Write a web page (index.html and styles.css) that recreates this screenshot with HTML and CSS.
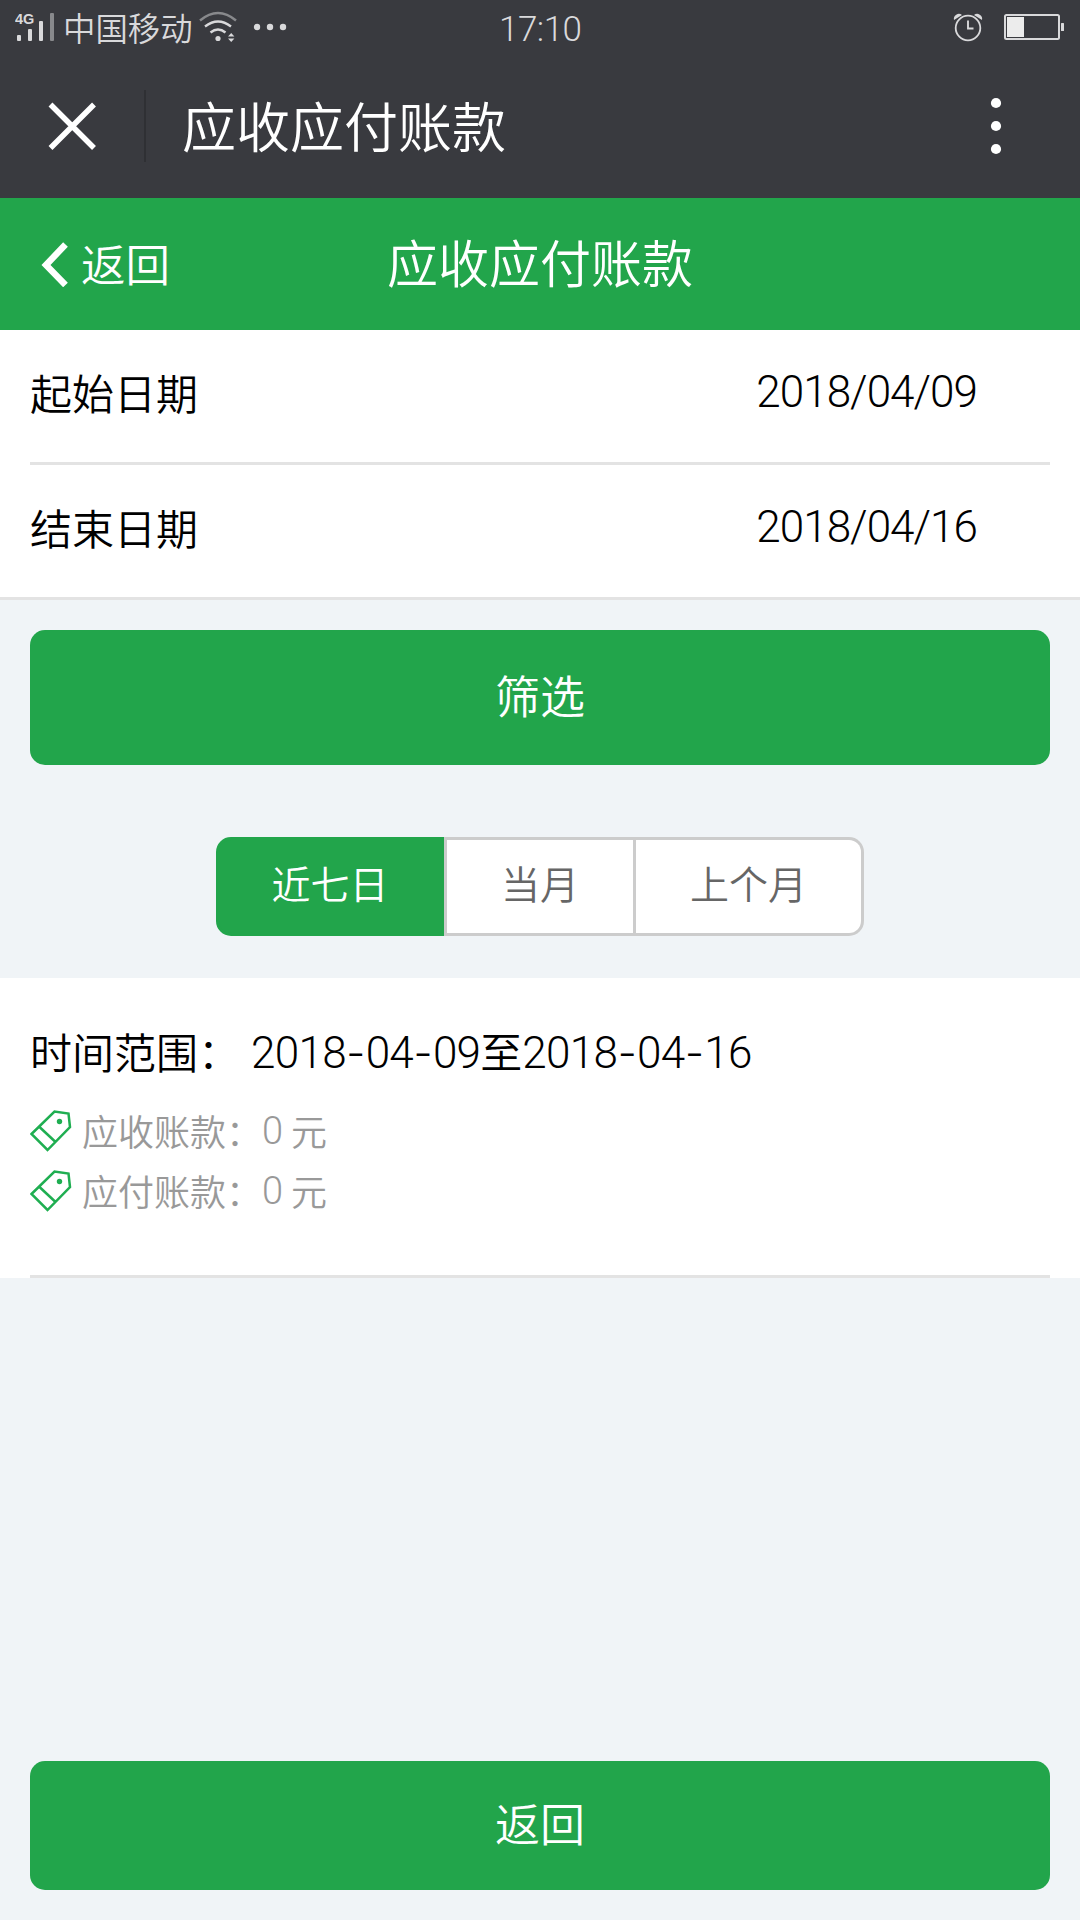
FILE: index.html
```html
<!DOCTYPE html>
<html lang="zh-CN">
<head>
<meta charset="utf-8">
<title>应收应付账款</title>
<link rel="stylesheet" href="styles.css">
</head>
<body>
<div class="screen">
  <div class="status">
    <svg class="signal" width="42" height="32" viewBox="0 0 42 32" fill="#d9d9db">
      <text class="signal-label" x="0" y="14">4G</text>
      <rect x="2" y="25" width="4" height="6" rx="1"/>
      <rect x="13" y="19" width="4" height="12" rx="1"/>
      <rect x="24" y="11" width="4" height="20" rx="1"/>
      <rect x="35" y="3" width="4" height="28" rx="1" fill="#88898c"/>
    </svg>
    <span class="carrier">中国移动</span>
    <svg class="wifi" width="40" height="32" viewBox="0 0 40 32" fill="none" stroke="#d9d9db" stroke-width="2.4">
      <path d="M1 10.5Q19 -4.500 37 10.500" stroke="#88898c"/>
      <path d="M6 16.500Q19 6.500 32 16.500"/>
      <path d="M11.500 22.500Q19 16.500 26.500 22.500"/>
      <circle cx="19" cy="28.500" r="2.600" fill="#d9d9db" stroke="none"/>
      <path d="M29 26.500l3.200-3.500 3.200 3.500zM29 28.500l3.200 3.500 3.200-3.500z" fill="#d9d9db" stroke="none"/>
    </svg>
    <svg class="more" width="34" height="8" viewBox="0 0 34 8" fill="#d9d9db">
      <circle cx="4" cy="4" r="3.200"/><circle cx="17" cy="4" r="3.200"/><circle cx="30" cy="4" r="3.200"/>
    </svg>
    <span class="clock">17:10</span>
    <svg class="alarm" width="30" height="30" viewBox="0 0 30 30">
      <path d="M1 8a5 5 0 0 1 8-5zM29 8a5 5 0 0 0-8-5z" fill="#d9d9db"/>
      <circle cx="15" cy="16" r="12.300" fill="#393a3f" stroke="#d9d9db" stroke-width="1.800"/>
      <path d="M15 8.500V16.500H20.500" fill="none" stroke="#d9d9db" stroke-width="1.900"/>
    </svg>
    <svg class="battery" width="60" height="26" viewBox="0 0 60 26">
      <rect x="1" y="1" width="54" height="24" rx="1.500" fill="none" stroke="#d9d9db" stroke-width="2"/>
      <rect x="3" y="3" width="17" height="20" fill="#ececec"/>
      <rect x="57" y="9" width="3" height="8" rx="0.500" fill="#d9d9db"/>
    </svg>
  </div>
  <header class="appbar">
    <svg class="close" width="48" height="48" viewBox="0 0 48 48" stroke="#fff" stroke-width="5.500">
      <path d="M2.500 2.500L46 46M46 2.500L2.500 46"/>
    </svg>
    <span class="divider"></span>
    <h1 class="appbar-title">应收应付账款</h1>
    <svg class="menu" width="12" height="58" viewBox="0 0 12 58" fill="#fff">
      <circle cx="6" cy="6" r="5.100"/><circle cx="6" cy="29" r="5.100"/><circle cx="6" cy="52" r="5.100"/>
    </svg>
  </header>
  <nav class="navbar">
    <span class="back">
      <svg width="28" height="46" viewBox="0 0 28 46" fill="none" stroke="#fff" stroke-width="6.500">
        <path d="M24.500 3.500L5 24L24.500 44"/>
      </svg>
      <span>返回</span>
    </span>
    <h2 class="nav-title">应收应付账款</h2>
  </nav>
  <section class="dates">
    <div class="date-row"><span>起始日期</span><span class="date">2018/04/09</span></div>
    <div class="date-row"><span>结束日期</span><span class="date">2018/04/16</span></div>
  </section>
  <button class="btn filter">筛选</button>
  <div class="segments">
    <span class="segment active">近七日</span>
    <span class="segment month">当月</span>
    <span class="segment last">上个月</span>
  </div>
  <section class="result">
    <div class="range"><span>时间范围：</span><span class="range-value">2018<i>-</i>04<i>-</i>09<b>至</b>2018<i>-</i>04<i>-</i>16</span></div>
    <div class="amount">
      <svg width="42" height="42" viewBox="0 0 42 42" fill="none" stroke="#1fae51" stroke-width="2.500">
        <path d="M1.500 24L24.500 1.500L38.500 3.500L40 17L17.500 40ZM9.500 17L25 31.500"/>
        <circle cx="29.500" cy="11.500" r="2.700" fill="#1fae51" stroke="none"/>
      </svg>
      <span class="amount-label">应收账款：</span><span class="zero">0</span><span>元</span>
    </div>
    <div class="amount">
      <svg width="42" height="42" viewBox="0 0 42 42" fill="none" stroke="#1fae51" stroke-width="2.500">
        <path d="M1.500 24L24.500 1.500L38.500 3.500L40 17L17.500 40ZM9.500 17L25 31.500"/>
        <circle cx="29.500" cy="11.500" r="2.700" fill="#1fae51" stroke="none"/>
      </svg>
      <span class="amount-label">应付账款：</span><span class="zero">0</span><span>元</span>
    </div>
  </section>
  <button class="btn return">返回</button>
</div>
</body>
</html>
```
FILE: styles.css
```css
* { box-sizing: border-box; }

body {
  margin: 0;
  background: #f0f4f7;
  font-family: "Noto Sans CJK SC", sans-serif;
  font-weight: 350;
  color: #000;
}

h1, h2 { margin: 0; font-weight: 350; }
svg { display: block; flex: none; }

.screen {
  width: 1080px;
  height: 1920px;
  display: flex;
  flex-direction: column;
  white-space: nowrap;
}

/* Status bar */
.status {
  height: 54px;
  flex: none;
  display: flex;
  align-items: flex-start;
  padding: 10px 16px 0 15px;
  background: #393a3f;
  color: #d9d9db;
}
.signal-label { font: 700 14.500px "Liberation Sans", sans-serif; }
.carrier { margin: 1px 0 0 6px; width: 131px; font-size: 32.400px; line-height: 32px; }
.wifi { margin-left: 5px; }
.more { margin: 13px 0 0 14px; }
.clock {
  margin: 3px 0 0 212px;
  width: 91px;
  font: 300 35px/33px Roboto, sans-serif;
  letter-spacing: -0.500px;
}
.alarm { margin: 2px 0 0 363px; }
.battery { margin: 4px 0 0 auto; }

/* Browser title bar */
.appbar {
  height: 144px;
  flex: none;
  display: flex;
  align-items: center;
  padding: 0 78px 0 48px;
  background: #393a3f;
  color: #fff;
}
.divider { width: 2px; height: 72px; margin: 0 36px 0 48px; background: #2f3034; }
.appbar-title { padding-bottom: 3px; font-size: 54px; line-height: 60px; }
.menu { margin-left: auto; }

/* Page navigation */
.navbar {
  height: 132px;
  flex: none;
  display: grid;
  grid-template-columns: 1fr auto 1fr;
  align-items: center;
  padding: 0 41px;
  background: #22a54b;
  color: #fff;
}
.back { display: flex; align-items: center; gap: 12px; font-size: 44.500px; line-height: 50px; }
.back span { padding-bottom: 3px; }
.nav-title { padding-bottom: 7px; font-size: 51px; line-height: 60px; }

/* Date inputs */
.dates { flex: none; background: #fff; border-bottom: 3px solid #e3e3e3; }
.date-row {
  height: 132px;
  display: flex;
  justify-content: space-between;
  align-items: center;
  padding: 0 73px 9px 0;
  margin: 0 30px;
  font-size: 42px;
}
.date-row + .date-row { height: 135px; border-top: 3px solid #e3e3e3; }
.date { font-family: Roboto, sans-serif; font-weight: 300; font-size: 44px; letter-spacing: -0.950px; }

.btn {
  flex: none;
  margin: 30px 30px 0;
  padding: 0 0 7px;
  border: 0;
  border-radius: 15px;
  background: #22a54b;
  color: #fff;
  font: 350 45px "Noto Sans CJK SC", sans-serif;
}
.filter { height: 135px; }
.return { height: 129px; margin: auto 30px 30px; }

/* Range switch */
.segments { display: flex; flex: none; justify-content: center; margin: 72px 0 42px; }
.segment {
  height: 99px;
  display: flex;
  align-items: center;
  justify-content: center;
  padding-bottom: 10px;
  border: 3px solid #ccc;
  background: #fff;
  color: #666;
  font-size: 39px;
}
.active { width: 228px; border-color: #22a54b; border-radius: 15px 0 0 15px; background: #22a54b; color: #fff; }
.month { width: 192px; }
.last { width: 228px; border-left: 0; border-radius: 0 15px 15px 0; }

/* Result */
.result { height: 300px; flex: none; padding: 46px 30px 0; background: #fff; }
.result::after { content: ""; display: block; height: 3px; margin-top: 54px; background: #e3e3e3; }
.range { display: flex; height: 56px; margin-bottom: 21px; align-items: center; gap: 11px; font-size: 42px; }
.range > span { line-height: 56px; }
.range > span:first-child { padding-bottom: 2px; }
.range-value { padding-top: 2px; font-family: Roboto, "Noto Sans CJK SC", sans-serif; font-weight: 300; font-size: 44px; letter-spacing: -0.700px; }
.range-value i { margin: 0 1px 0 0.500px; font-style: normal; font-family: Inter, sans-serif; font-size: 42px; }
.range-value b { font: 350 42px/50px "Noto Sans CJK SC", sans-serif; letter-spacing: 0; }
.amount { display: flex; height: 60px; align-items: center; color: #999; font-size: 36px; }
.amount > span { padding-bottom: 3px; }
.amount-label { margin-left: 10px; }
.amount .zero { width: 29px; padding-bottom: 0; font: 300 38px Roboto, sans-serif; }
```
